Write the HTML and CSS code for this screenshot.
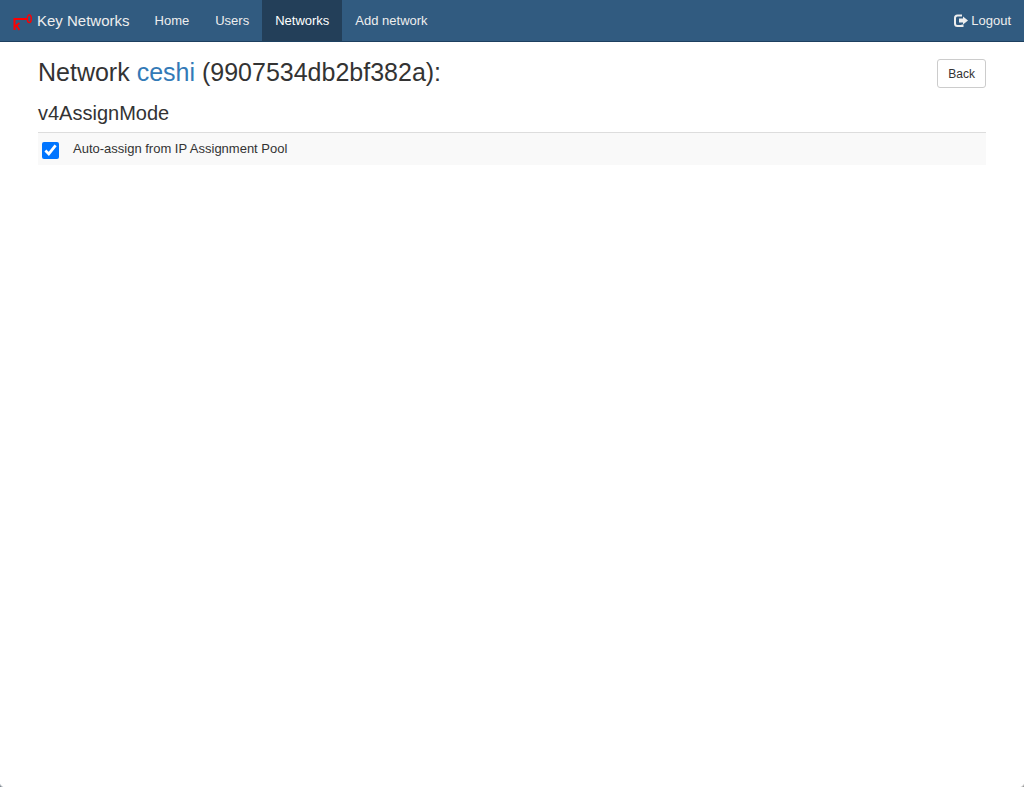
FILE: index.html
```
<!DOCTYPE html>
<html lang="en">
<head>
	<meta charset="UTF-8">
	<title>Key Networks</title>
	<meta name="viewport" content="width=device-width, initial-scale=1">
	<link rel="stylesheet" href="styles.css">
</head>
<body>
	<nav class="navbar">
		<a class="brand" href="#">
			<svg class="brand-logo" viewBox="0 0 20 20" aria-hidden="true">
				<path d="M15 8H2.500V19" fill="none" stroke="#f00" stroke-width="2"/>
				<path d="M3 15.500L7.500 12M4.500 14.500L7.500 19" fill="none" stroke="#f00" stroke-width="1.800"/>
				<ellipse cx="17.300" cy="7.800" rx="2" ry="3.800" fill="none" stroke="#f00" stroke-width="1.400"/>
			</svg>
			Key Networks
		</a>
		<ul class="menu">
			<li><a href="#">Home</a></li>
			<li><a href="#">Users</a></li>
			<li><a class="active" href="#">Networks</a></li>
			<li><a href="#">Add network</a></li>
		</ul>
		<a class="logout" href="#">
			<svg class="logout-icon" viewBox="0 0 14 14" aria-hidden="true">
				<path d="M8 1.500H3.500Q1 1.500 1 4v5.500Q1 12 3.500 12H8.500V10.500" fill="none" stroke="currentColor" stroke-width="2"/>
				<path d="M9 2.500L14 6.500l-5 4V8.500H5V4.500h4z" fill="currentColor"/>
			</svg>
			Logout
		</a>
	</nav>
	<main class="container">
		<header class="page-header">
			<h3 class="title">Network <a href="#">ceshi</a> (9907534db2bf382a):</h3>
			<button class="btn" type="button">Back</button>
		</header>
		<h4 class="subtitle">v4AssignMode</h4>
		<div class="option">
			<input class="check" type="checkbox" id="zt" checked>
			<label for="zt">Auto-assign from IP Assignment Pool</label>
		</div>
	</main>
</body>
</html>
```

FILE: styles.css
```
*,
*:before,
*:after{
	box-sizing: border-box;
}

body{
	margin: 0;
	min-height: 100vh;
	font-family: "Liberation Sans", Arial, sans-serif;
	font-size: 13px;
	line-height: 18px;
	color: #333;
	background:
		radial-gradient(circle at 100% 0, transparent 6px, #707b85 8px) left bottom / 6px 6px no-repeat,
		radial-gradient(circle at 0 0, transparent 6px, #8c8c8c 8px) right bottom / 6px 6px no-repeat,
		#fff;
}

a{
	color: #337ab7;
	text-decoration: none;
}

.navbar{
	display: flex;
	height: 42px;
	background-color: #315b80;
	border-bottom: 1px solid #1d4060;
}
.navbar a{
	display: flex;
	align-items: center;
	padding: 0 13px;
	color: #eee;
}
.navbar .brand{
	gap: 5px;
	padding: 0 12px;
	font-size: 15px;
}
.brand-logo{
	width: 20px;
	height: 20px;
}
.menu{
	display: flex;
	margin: 0;
	padding: 0;
	list-style: none;
}
.menu li{
	display: flex;
}
.navbar .active{
	color: #fff;
	background-color: #233f59;
}
.navbar .logout{
	gap: 3px;
	margin-left: auto;
}
.logout-icon{
	width: 14px;
	height: 14px;
}

.container{
	padding: 16px 38px;
}
.page-header{
	display: flex;
	justify-content: space-between;
	align-items: flex-start;
}
.title,
.subtitle{
	margin: 0;
	font-weight: 400;
}
.title{
	font-size: 25px;
	line-height: 28px;
}
.subtitle{
	margin: 14px 0 8px;
	font-size: 20px;
	line-height: 22px;
}
.btn{
	height: 29px;
	margin-top: 1px;
	padding: 0 10px;
	font-family: inherit;
	font-size: 12px;
	color: #333;
	background-color: #fff;
	border: 1px solid #ccc;
	border-radius: 3px;
}

.option{
	display: flex;
	gap: 14px;
	padding: 7px 4px 6px;
	background-color: #f9f9f9;
	border-top: 1px solid #ddd;
}
.check{
	width: 17px;
	height: 17px;
	margin: 2px 0 0;
	accent-color: #0075ff;
}
```
